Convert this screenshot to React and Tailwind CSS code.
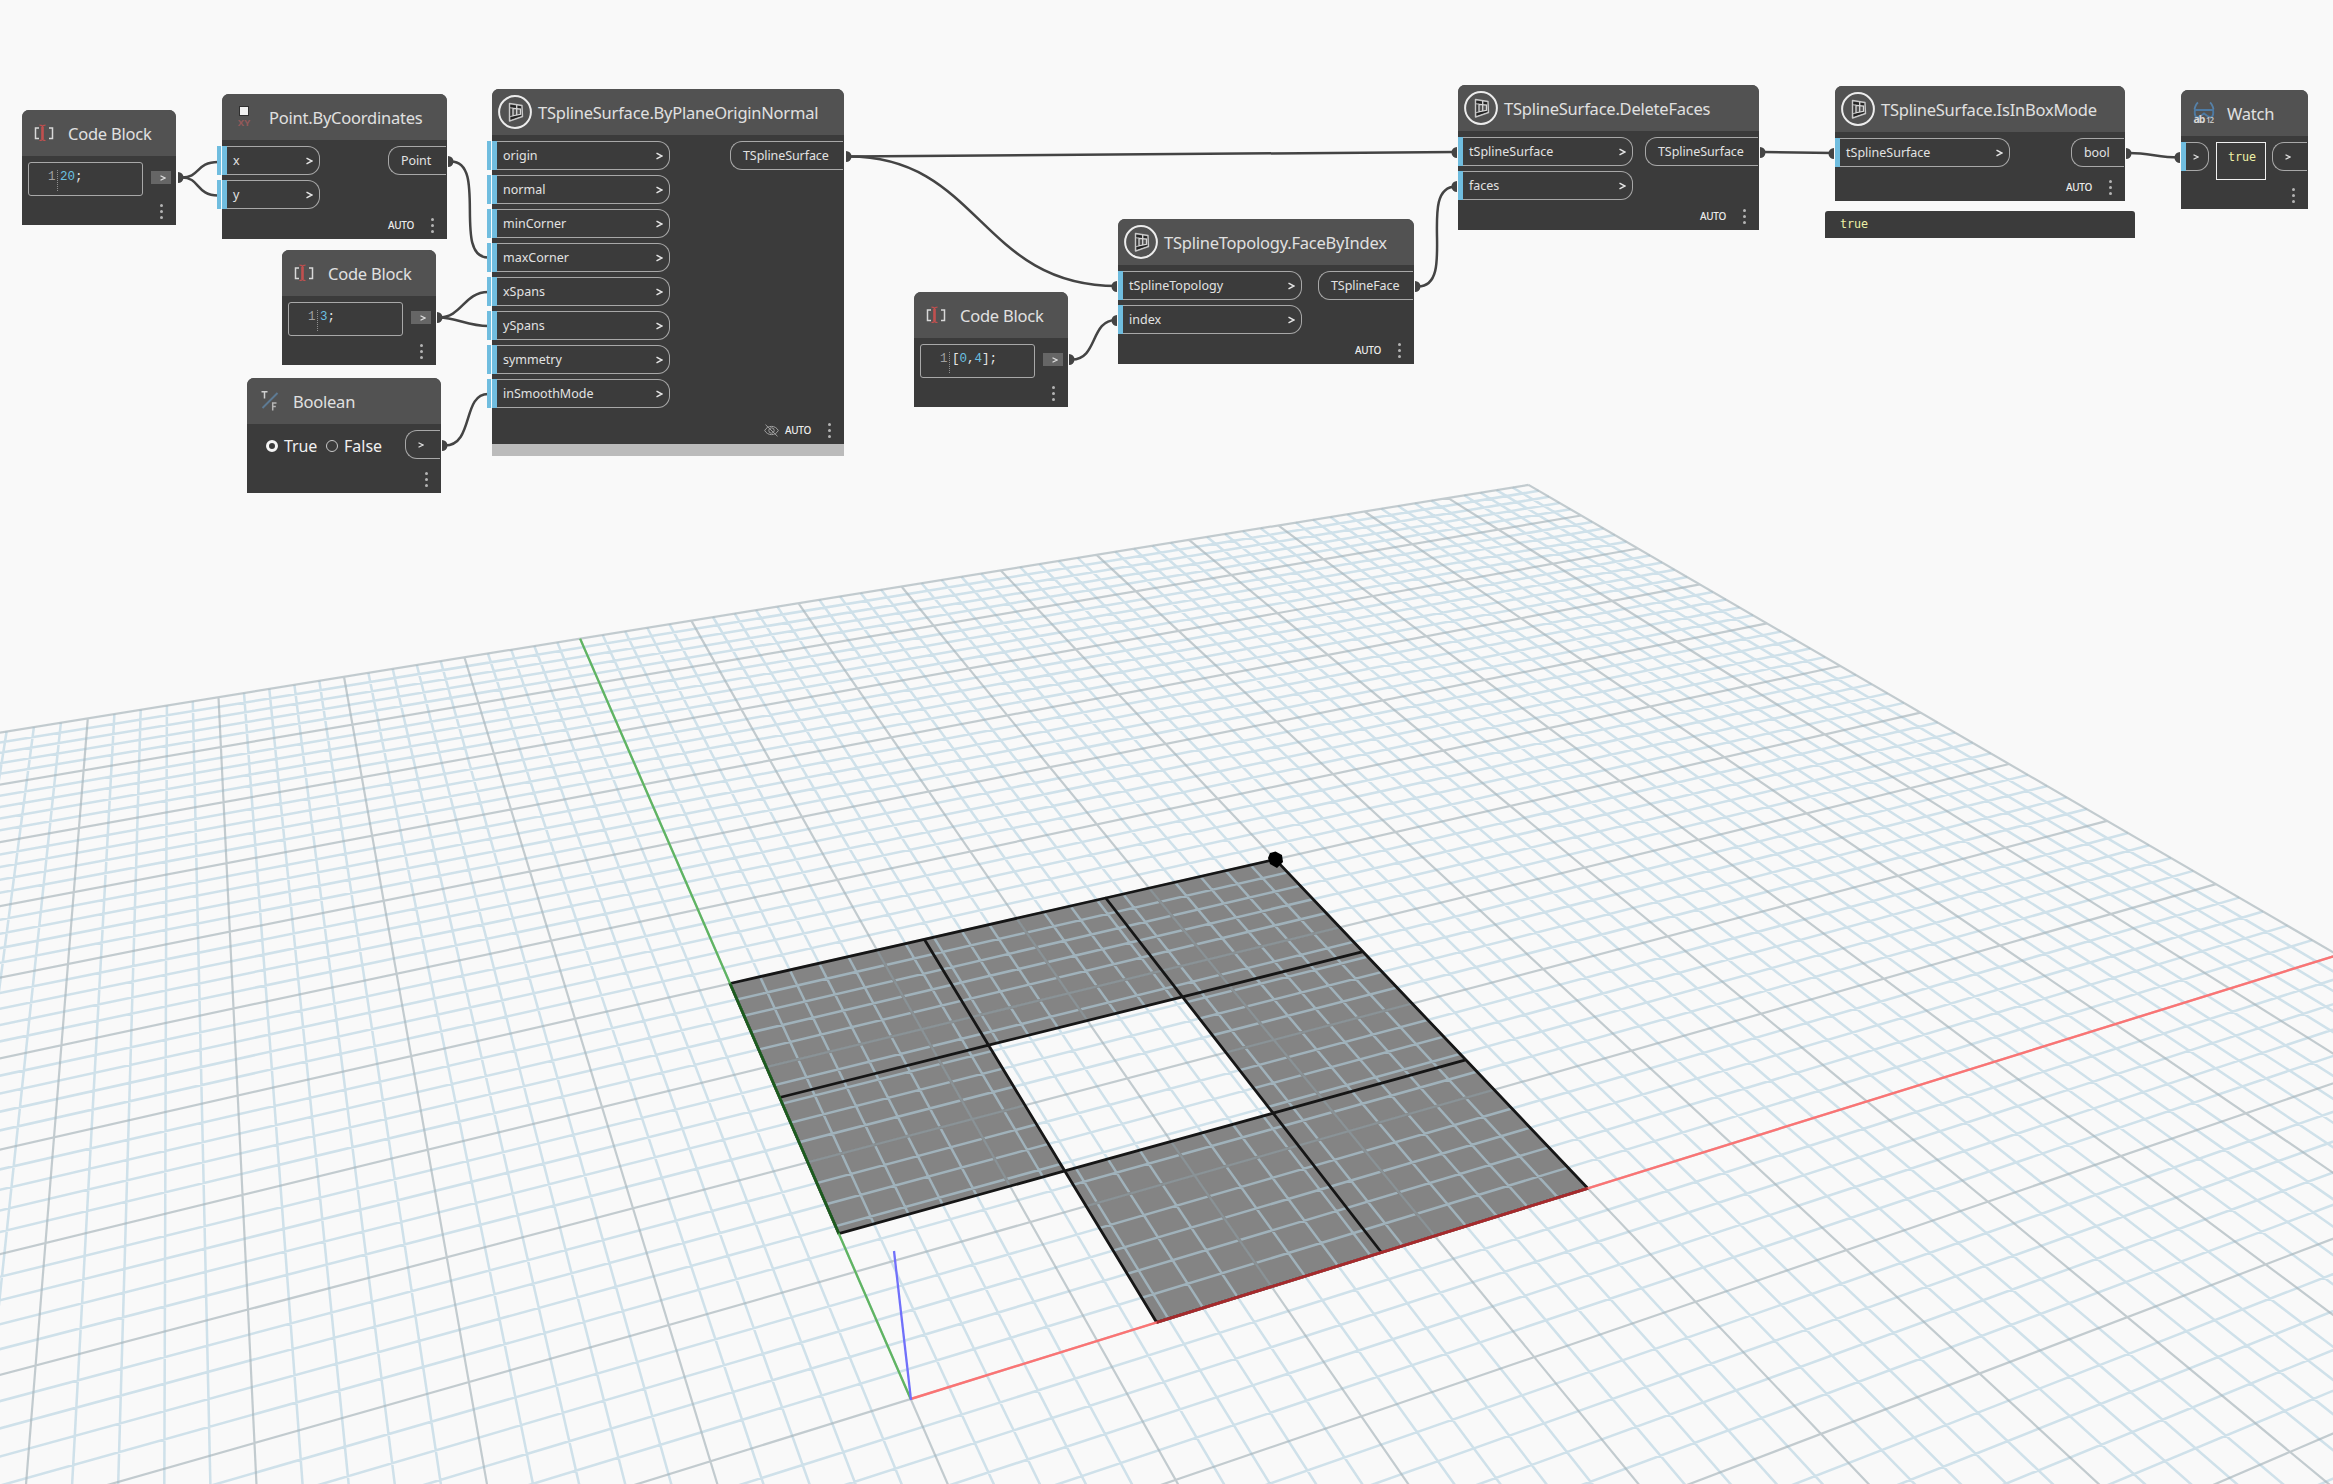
import React from "react";

const W = 2333;
const H = 1484;

/* ---------- ground plane projection ---------- */

// [world x, world y, screen x, screen y]
const CONTROL = [
  [0, 0, 910.6, 1400.6],
  [20, 0, 1588, 1188.5],
  [0, 20, 729.8, 984.3],
  [20, 20, 1275.7, 861.3],
  [50, 50, 1528.1, 484.1],
  [0, 50, 580, 639],
  [20, 50, 1001.7, 570.7],
  [50, 5, 2215.6, 883.2],
  [-20, 50, 87.3, 718.9],
  [-20, 20, 54, 1133.2],
];

function solve(A, b) {
  const n = b.length;
  const M = A.map((r, i) => [...r, b[i]]);
  for (let c = 0; c < n; c++) {
    let p = c;
    for (let r = c + 1; r < n; r++) if (Math.abs(M[r][c]) > Math.abs(M[p][c])) p = r;
    [M[c], M[p]] = [M[p], M[c]];
    for (let r = 0; r < n; r++) {
      if (r === c) continue;
      const f = M[r][c] / M[c][c];
      for (let k = c; k <= n; k++) M[r][k] -= f * M[c][k];
    }
  }
  return M.map((r, i) => r[n] / r[i]);
}

function fitPlane() {
  const rows = [];
  const rhs = [];
  CONTROL.forEach(([X, Y, u, v]) => {
    const x = X / 50;
    const y = Y / 50;
    const a = u / 1000;
    const b = v / 1000;
    rows.push([x, y, 1, 0, 0, 0, -a * x, -a * y]);
    rhs.push(a);
    rows.push([0, 0, 0, x, y, 1, -b * x, -b * y]);
    rhs.push(b);
  });
  const N = Array.from({ length: 8 }, (_, i) =>
    Array.from({ length: 8 }, (_, j) => rows.reduce((s, r) => s + r[i] * r[j], 0))
  );
  const t = Array.from({ length: 8 }, (_, i) => rows.reduce((s, r, k) => s + r[i] * rhs[k], 0));
  return solve(N, t);
}

const P = fitPlane();
const depth = (X, Y) => (P[6] * X) / 50 + (P[7] * Y) / 50 + 1;
function project(X, Y) {
  const w = depth(X, Y);
  const x = X / 50;
  const y = Y / 50;
  return [(1000 * (P[0] * x + P[1] * y + P[2])) / w, (1000 * (P[3] * x + P[4] * y + P[5])) / w];
}
const pt = (X, Y) => project(X, Y).map((n) => n.toFixed(1)).join(" ");

// segment trimmed where it passes behind the camera
function segment(x0, y0, x1, y1) {
  const near = 0.3;
  let a = [x0, y0];
  let b = [x1, y1];
  const wa = depth(x0, y0);
  const wb = depth(x1, y1);
  if (wa < near && wb < near) return "";
  const cut = (near - wa) / (wb - wa);
  const c = [x0 + (x1 - x0) * cut, y0 + (y1 - y0) * cut];
  if (wa < near) a = c;
  if (wb < near) b = c;
  return `M${pt(a[0], a[1])}L${pt(b[0], b[1])}`;
}

let minor = "";
let major = "";
for (let i = -50; i <= 50; i++) {
  const d = segment(i, 50, i, -50) + segment(50, i, -50, i);
  if (i % 5 === 0) major += d;
  else minor += d;
}

const S = 20 / 3;
const FACES = [];
for (let r = 0; r < 3; r++)
  for (let c = 0; c < 3; c++) {
    if ((r === 0 && c === 0) || (r === 1 && c === 1)) continue;
    FACES.push(
      `M${pt(c * S, r * S)}L${pt((c + 1) * S, r * S)}L${pt((c + 1) * S, (r + 1) * S)}L${pt(c * S, (r + 1) * S)}Z`
    );
  }
const faces = FACES.join("");

function Viewport() {
  return (
    <svg className="absolute inset-0" width={W} height={H} viewBox={`0 0 ${W} ${H}`} fill="none">
      <defs>
        <clipPath id="surface">
          <path d={faces} />
        </clipPath>
      </defs>
      <path d={faces} fill="#848484" />
      <path d={minor} stroke="#b2d0e0" strokeOpacity="0.6" strokeWidth="2.5" />
      <path d={major} stroke="#a6b3b9" strokeOpacity="0.66" strokeWidth="2.2" />
      <g clipPath="url(#surface)">
        <path d={major} stroke="#848484" strokeWidth="3" />
        <path d={major} stroke="#8fa2aa" strokeOpacity="0.5" strokeWidth="2.2" />
      </g>
      <path d={faces} stroke="#161616" strokeWidth="2.8" strokeLinejoin="round" />
      <path d={`M${pt(0, 0)}L${pt(50, 0)}`} stroke="#fb7474" strokeWidth="2.4" />
      <path d={`M${pt(0, 0)}L${pt(0, 50)}`} stroke="#5fb562" strokeWidth="2.3" />
      <path d={`M${pt(S, 0)}L${pt(20, 0)}`} stroke="#a52a2c" strokeWidth="2.8" />
      <path d={`M${pt(0, S)}L${pt(0, 20)}`} stroke="#1c5a1e" strokeWidth="2.6" />
      <path d="M911 1400L894 1251" stroke="#7070fa" strokeWidth="2.3" />
      <path d="M1275.500 851.500L1282 855L1283 862L1277 868L1270 864L1268 858L1270 853Z" fill="#000" />
    </svg>
  );
}

/* ---------- wires ---------- */

const WIRES = [
  "M182 177.500C200 177.500 196 162 218 162",
  "M182 177.500C200 177.500 196 195.500 218 195.500",
  "M451 161.500C488 161.500 452 257.500 488 257.500",
  "M439 317.500C462 317.500 464 292 488 292",
  "M439 317.500C456 317.500 468 326 488 326",
  "M445 445.500C474 445.500 462 394 488 394",
  "M849 156.500L1456 152",
  "M849 156.500C980 156.500 980 286 1117 286",
  "M1072 359.500C1098 359.500 1090 320 1116 320",
  "M1418 286.500C1458 286.500 1416 186.500 1456 186.500",
  "M1763 152L1833 153",
  "M2129 153C2150 153 2158 157.500 2179 157.500",
];
const OUT_DOTS = [
  [178, 177.5],
  [448, 161.5],
  [437, 317.5],
  [442, 445.5],
  [846, 156.5],
  [1069, 359.5],
  [1415, 286.5],
  [1760, 152.5],
  [2126, 153.5],
];
const IN_DOTS = [
  [1117, 286.5],
  [1117, 320.5],
  [1457, 152.5],
  [1457, 186.5],
  [1834, 153.5],
  [2180, 157.5],
];

function Wires() {
  return (
    <svg className="absolute inset-0" width={W} height={H} viewBox={`0 0 ${W} ${H}`} fill="none">
      {WIRES.map((d) => (
        <path key={d} d={d} stroke="#444444" strokeWidth="2.5" />
      ))}
      {OUT_DOTS.map(([x, y]) => (
        <path key={x} d={`M${x} ${y - 5.5}a5.5 5.5 0 0 1 0 11z`} fill="#444444" />
      ))}
      {IN_DOTS.map(([x, y]) => (
        <path key={`${x}-${y}`} d={`M${x} ${y - 5.5}a5.5 5.5 0 0 0 0 11z`} fill="#444444" />
      ))}
    </svg>
  );
}

/* ---------- icons ---------- */

const BracketIcon = () => (
  <svg width="20" height="18" viewBox="0 0 20 18" fill="none" className="shrink-0">
    <path d="M5 4H1.500V14.500H5M15 4H18.500V14.500H15" stroke="#d8d8d8" strokeWidth="1.500" />
    <path d="M5.500 1.200C7 1.200 8.500 1.500 8.500 3V14.500C8.500 16 7 16.500 5.500 16.500M11.500 1.200C10 1.200 8.500 1.500 8.500 3M8.500 14.500C8.500 16 10 16.500 11.500 16.500" stroke="#c0504f" strokeWidth="1.200" />
    <path d="M8.500 3V15" stroke="#c0504f" strokeWidth="2.600" />
  </svg>
);

const PointIcon = () => (
  <span className="flex w-[14px] shrink-0 flex-col items-center">
    <span className="h-[10px] w-[10px] border-[1.500px] border-[#2f2f2f] bg-[#f0f0f0]" />
    <span className="mt-[2px] text-[9.500px] leading-[10px] font-bold text-[#94595a]">XY</span>
  </span>
);

const BoolIcon = () => (
  <svg width="18" height="22" viewBox="0 0 18 22" fill="none" className="shrink-0">
    <path d="M1.500 18L16.500 3" stroke="#5d7a93" strokeWidth="2" />
    <path d="M0.500 1.700H6.500M3.500 1.700V8.500" stroke="#cfcfcf" strokeWidth="1.500" />
    <path d="M15.500 13H11.700V20.500M11.700 16.500H14.800" stroke="#b5b5b5" strokeWidth="1.500" />
  </svg>
);

const WatchIcon = () => (
  <svg width="22" height="25" viewBox="0 0 22 25" fill="none" className="shrink-0">
    <path d="M5 1.500C3 3 2 6 1.500 8.500M17 1.500C19 3 20 6 20.500 8.500" stroke="#5681a8" strokeWidth="1.800" />
    <path d="M1 9H21M2 9C1.500 12 2 15.500 4 16.500L7 15.500L11 12.500L15 15.500L18 16.500C20 15.500 20.500 12 20 9" stroke="#4d7aa3" strokeWidth="1.900" />
    <text x="0.500" y="22" fontSize="10.500" fontWeight="700" fill="#d8d8d8" fontFamily="Noto Sans, sans-serif" textLength="12">ab</text>
    <text x="13" y="22" fontSize="8" fontWeight="600" fill="#c4c4c4" fontFamily="Noto Sans, sans-serif" textLength="8">12</text>
  </svg>
);

const SplineIcon = () => (
  <svg width="34" height="34" viewBox="0 0 34 34" fill="none" className="shrink-0">
    <circle cx="17" cy="17" r="15.900" stroke="#ececec" strokeWidth="2" />
    <path d="M11.500 8.500L24 10.500L24.500 21.500L11.500 26Z" fill="#3a3a3a" stroke="#c9c9c9" strokeWidth="1.400" strokeLinejoin="round" />
    <path d="M12.700 9.900L17.800 10.700V12.700L12.700 12Z M19.500 11L22.800 11.500V13.500L19.500 13Z M13 22L17.500 20.700L22.800 19.800V21L13 24.500Z" fill="#222222" />
    <path d="M15 13.300L22.500 14.200V19.300L15 20.800Z" fill="#525252" stroke="#d6d6d6" strokeWidth="1.300" />
    <path d="M18.700 10V20" stroke="#d6d6d6" strokeWidth="1.300" />
    <path d="M12 12.800L15 13.300M12 21.800L15 20.800" stroke="#b9b9b9" strokeWidth="1.100" />
  </svg>
);

const HiddenIcon = () => (
  <svg width="15" height="13" viewBox="0 0 15 13" fill="none">
    <path d="M0.700 6.500C3.500 1 11.500 1 14.300 6.500C11.500 12 3.500 12 0.700 6.500Z" stroke="#a0a0a0" strokeWidth="1" />
    <circle cx="7.500" cy="6.500" r="2.700" stroke="#a0a0a0" strokeWidth="1" />
    <path d="M1.500 0.700L13.500 12.300" stroke="#a0a0a0" strokeWidth="1" />
  </svg>
);

/* ---------- node parts ---------- */

const Arrow = () => (
  <svg width="7" height="8" viewBox="0 0 7 8" fill="none">
    <path d="M0.500 1.200L6 4L0.500 6.800" stroke="#e4e4e4" strokeWidth="1.500" />
  </svg>
);
const SmallArrow = () => (
  <svg width="6" height="6" viewBox="0 0 6 6" fill="none">
    <path d="M0.500 0.700L5 3L0.500 5.300" stroke="#dedede" strokeWidth="1.200" />
  </svg>
);

const Dots = () => (
  <span className="flex w-[3px] flex-col gap-[3px]">
    <i className="h-[3px] w-[3px] rounded-full bg-[#b4b4b4]" />
    <i className="h-[3px] w-[3px] rounded-full bg-[#b4b4b4]" />
    <i className="h-[3px] w-[3px] rounded-full bg-[#b4b4b4]" />
  </span>
);

function InPort({ label, width, tab }) {
  return (
    <div className={`relative flex h-[29px] items-center justify-between rounded-r-[12px] border border-l-0 border-[#a8a8a8] pr-[6px] pl-[11px] ${width}`}>
      <i className="absolute -top-px left-0 h-[29px] w-[5px] bg-[#70bddf]" />
      {tab && <i className="absolute -top-px -left-[5px] h-[29px] w-[5px] border-r border-[#f4fafd] bg-[#70bddf]" />}
      <span className="pt-px text-[12.500px] whitespace-nowrap">{label}</span>
      <Arrow />
    </div>
  );
}

function OutPort({ label, width }) {
  return (
    <div className={`mr-px flex h-[29px] items-center rounded-l-[12px] border border-r-0 border-[#a8a8a8] pl-[12px] ${width}`}>
      {label ? <span className="pt-px text-[12.500px] tracking-[-0.080px] whitespace-nowrap">{label}</span> : <SmallArrow />}
    </div>
  );
}

function Node({ frame, icon, title, head = "", children, auto, hidden, bar }) {
  return (
    <section className={`absolute flex flex-col rounded-t-[7px] bg-[#3b3b3b] text-[#e2e2e2] ${frame}`}>
      <header className={`flex h-[46px] shrink-0 items-center rounded-t-[7px] bg-[#525252] ${head}`}>
        {icon}
        <h2 className="pt-[2px] text-[16.500px] leading-[22px] tracking-[-0.230px] whitespace-nowrap text-[#e0e0e0]">{title}</h2>
      </header>
      <div className="flex items-start justify-between pt-[6px]">{children}</div>
      <footer className="mt-auto flex h-[28px] shrink-0 items-center justify-end pr-[13px]">
        {hidden && (
          <span className="mr-[6px]">
            <HiddenIcon />
          </span>
        )}
        {auto && <span className="mr-[17px] text-[10px] font-medium tracking-[-0.300px] text-[#ececec]">AUTO</span>}
        <Dots />
      </footer>
      {bar && <div className="h-[12px] shrink-0 bg-[#bbbbbb]" />}
    </section>
  );
}

function CodeBlock({ frame, children }) {
  return (
    <Node frame={frame} head="pl-[12px] gap-[14px]" icon={<BracketIcon />} title="Code Block">
      <div className="ml-[6px] flex h-[34px] w-[115px] items-center rounded-[3px] border border-[#a8a8a8] pl-[19px] font-['Liberation_Mono',monospace] text-[12.500px] text-[#e6e6e6]">
        <span className="-mt-[3px] w-[9px] text-[#a0a0a0]">1</span>
        <span className="mt-[2px] h-[21px] border-l border-dotted border-[#8f8f8f]" />
        <span className="ml-[2px] -mt-[3px] whitespace-pre">{children}</span>
      </div>
      <div className="mt-[9px] mr-[5px] flex h-[13px] w-[20px] items-center justify-end bg-[#666666] pr-[5px]">
        <SmallArrow />
      </div>
    </Node>
  );
}

const Num = ({ children }) => <span className="text-[#6ac0e2]">{children}</span>;

const SURFACE_INPUTS = ["origin", "normal", "minCorner", "maxCorner", "xSpans", "ySpans", "symmetry", "inSmoothMode"];

export default function App() {
  return (
    <main className="relative h-[1484px] w-[2333px] overflow-hidden bg-[#f9f9f9] font-['Noto_Sans',sans-serif]">
      <Viewport />
      <Wires />

      <CodeBlock frame="left-[22px] top-[110px] w-[154px] h-[115px]">
        <Num>20</Num>;
      </CodeBlock>

      <Node frame="left-[222px] top-[94px] w-[225px] h-[145px]" head="pl-[15px] gap-[18px]" icon={<PointIcon />} title="Point.ByCoordinates" auto>
        <div className="flex flex-col gap-[5px]">
          <InPort label="x" width="w-[98px]" tab />
          <InPort label="y" width="w-[98px]" tab />
        </div>
        <OutPort label="Point" width="w-[58px]" />
      </Node>

      <CodeBlock frame="left-[282px] top-[250px] w-[154px] h-[115px]">
        <Num>3</Num>;
      </CodeBlock>

      <Node frame="left-[247px] top-[378px] w-[194px] h-[115px]" head="pl-[14px] gap-[14px]" icon={<BoolIcon />} title="Boolean">
        <div className="ml-[19px] flex h-[32px] items-center text-[16px] text-[#f0f0f0]">
          <i className="h-[12px] w-[12px] rounded-full border-[3.500px] border-[#f4f4f4]" />
          <span className="ml-[6px] w-[33px] tracking-[-0.100px]">True</span>
          <i className="ml-[9px] h-[12px] w-[12px] rounded-full border border-[#c8c8c8]" />
          <span className="ml-[6px]">False</span>
        </div>
        <OutPort width="w-[35px]" />
      </Node>

      <Node frame="left-[492px] top-[89px] w-[352px] h-[367px]" head="pl-[6px] gap-[6px]" icon={<SplineIcon />} title="TSplineSurface.ByPlaneOriginNormal" auto hidden bar>
        <div className="flex flex-col gap-[5px]">
          {SURFACE_INPUTS.map((label) => (
            <InPort key={label} label={label} width="w-[178px]" tab />
          ))}
        </div>
        <OutPort label="TSplineSurface" width="w-[113px]" />
      </Node>

      <CodeBlock frame="left-[914px] top-[292px] w-[154px] h-[115px]">
        [<Num>0</Num>,<Num>4</Num>];
      </CodeBlock>

      <Node frame="left-[1118px] top-[219px] w-[296px] h-[145px]" head="pl-[6px] gap-[6px]" icon={<SplineIcon />} title="TSplineTopology.FaceByIndex" auto>
        <div className="flex flex-col gap-[5px]">
          <InPort label="tSplineTopology" width="w-[184px]" />
          <InPort label="index" width="w-[184px]" />
        </div>
        <OutPort label="TSplineFace" width="w-[95px]" />
      </Node>

      <Node frame="left-[1458px] top-[85px] w-[301px] h-[145px]" head="pl-[6px] gap-[6px]" icon={<SplineIcon />} title="TSplineSurface.DeleteFaces" auto>
        <div className="flex flex-col gap-[5px]">
          <InPort label="tSplineSurface" width="w-[175px]" />
          <InPort label="faces" width="w-[175px]" />
        </div>
        <OutPort label="TSplineSurface" width="w-[113px]" />
      </Node>

      <Node frame="left-[1835px] top-[86px] w-[290px] h-[115px]" head="pl-[6px] gap-[6px]" icon={<SplineIcon />} title="TSplineSurface.IsInBoxMode" auto>
        <InPort label="tSplineSurface" width="w-[175px]" />
        <OutPort label="bool" width="w-[53px]" />
      </Node>

      <div className="absolute top-[211px] left-[1825px] flex h-[27px] w-[310px] items-center rounded-t-[3px] bg-[#3b3b3b] pt-px pl-[15px] font-['DejaVu_Sans_Mono',monospace] text-[11.700px] text-[#eef0a6]">
        true
      </div>

      <Node frame="left-[2181px] top-[90px] w-[127px] h-[119px]" head="pl-[12px] gap-[12px]" icon={<WatchIcon />} title="Watch">
        <div className="relative flex h-[29px] w-[28px] items-center rounded-r-[12px] border border-l-0 border-[#a8a8a8] pl-[12px]">
          <i className="absolute -top-px left-0 h-[29px] w-[5px] bg-[#70bddf]" />
          <SmallArrow />
        </div>
        <div className="flex h-[38px] w-[50px] justify-center border border-[#f0f0f0] pt-[5px] pl-[3px] font-['DejaVu_Sans_Mono',monospace] text-[11.700px] leading-[18px] text-[#eef0a6]">
          true
        </div>
        <OutPort width="w-[35px]" />
      </Node>
    </main>
  );
}
